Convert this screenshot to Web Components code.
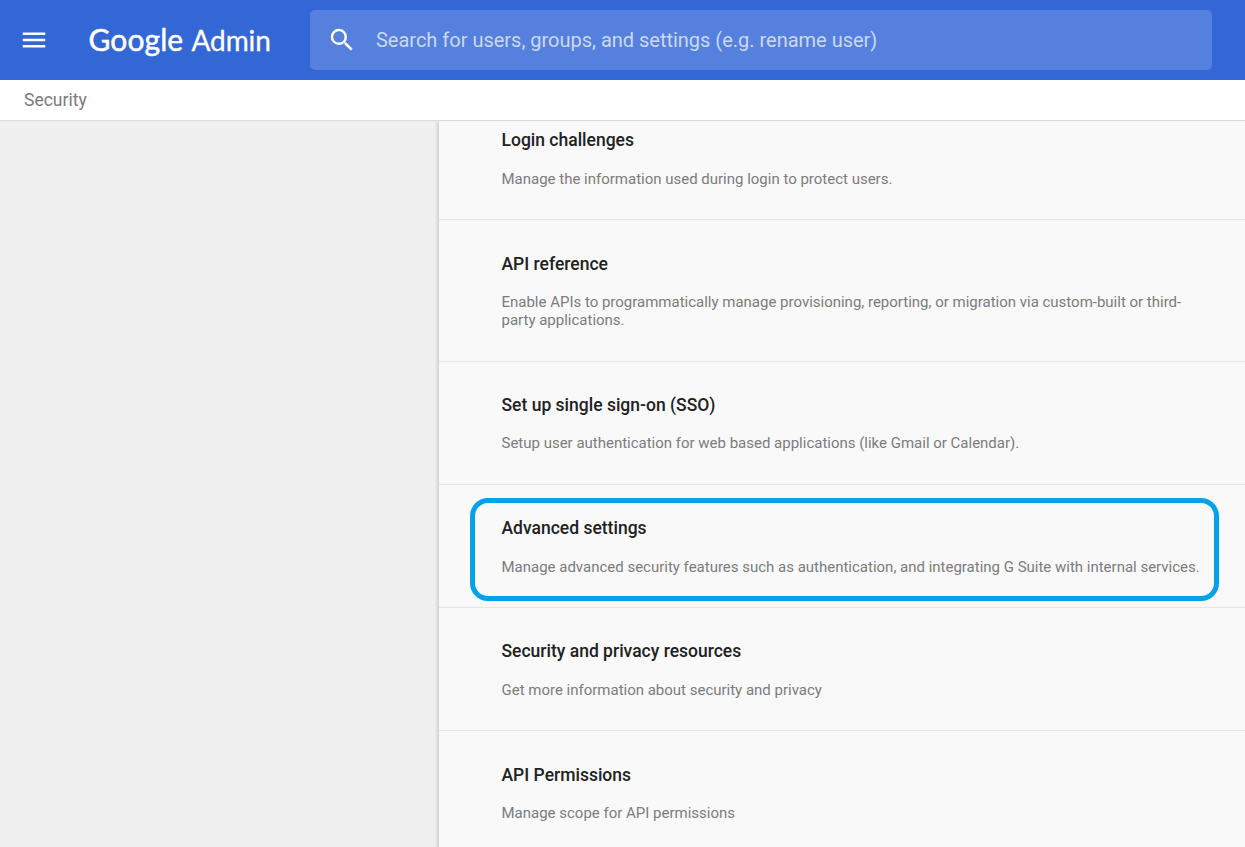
<!DOCTYPE html>
<html lang="en"><head><meta charset="utf-8"><title>Google Admin</title>
<style>html,body{margin:0;height:100%;overflow:hidden}body{font-family:Roboto,"Open Sans",sans-serif}</style></head>
<body><admin-page></admin-page>
<script>
function define(name, html) {
  customElements.define(name, class extends HTMLElement {
    constructor() {
      super();
      const t = document.createElement('template');
      t.innerHTML = html;
      this.attachShadow({mode: 'open'}).append(t.content.cloneNode(true));
    }
  });
}
define('admin-logo', `<style>
:host{display:flex;align-items:baseline;color:#fff;font-family:Lato,sans-serif;line-height:38px;padding-bottom:1px;white-space:nowrap}
.g{font-size:30px;width:103px;letter-spacing:.1px;-webkit-text-stroke:.5px #fff}
.a{font-size:28px;letter-spacing:-.1px;-webkit-text-stroke:.3px #fff}
</style><span class="g">Google</span><span class="a">Admin</span>`);
define('search-box', `<style>
:host{display:flex;align-items:center;box-sizing:border-box;width:902px;height:60px;border-radius:5px;background:#5580dd;padding-left:17px;color:#cbd8f5;font-size:20px}
svg{width:30px;height:30px;margin-right:19px;flex:none}
span{white-space:nowrap;letter-spacing:-.01px}
</style><svg viewBox="0 0 24 24" fill="#fff"><path d="M15.5 14h-.79l-.28-.27A6.47 6.47 0 0 0 16 9.5 6.5 6.5 0 1 0 9.5 16c1.61 0 3.09-.59 4.23-1.57l.27.28v.79l5 4.99L20.49 19l-4.99-5zm-6 0C7.01 14 5 11.99 5 9.5S7.01 5 9.5 5 14 7.01 14 9.5 11.99 14 9.5 14z"/></svg><span><slot></slot></span>`);
define('app-bar', `<style>
:host{display:flex;align-items:center;box-sizing:border-box;height:80px;background:#3367d6;padding-left:19px}
svg{width:30px;height:30px;flex:none}
admin-logo{margin-left:39.5px;width:221.5px;flex:none}
</style><svg viewBox="0 0 24 24" fill="#fff"><path d="M3 18h18v-2H3v2zm0-5h18v-2H3v2zm0-7v2h18V6H3z"/></svg>
<admin-logo></admin-logo><search-box>Search for users, groups, and settings (e.g. rename user)</search-box>`);
define('crumb-bar', `<style>
:host{display:flex;align-items:center;box-sizing:border-box;height:41px;background:#fff;border-bottom:1px solid #dcdcdc;padding-left:24px;color:#7b7b7b;font-size:17.5px}
</style><slot></slot>`);
define('setting-row', `<style>
:host{display:block;position:relative;box-sizing:border-box;height:var(--h,123px);border-bottom:1px solid #e5e5e5;padding:var(--top,32px) 46px 0 62.5px}
.t{color:#212121;font-size:17.5px;line-height:22px;font-weight:500}
.d{color:#7c7c7c;font-size:15px;line-height:18px;margin-top:var(--gap,19px);letter-spacing:-.006px;white-space:nowrap}
:host([highlight])::after{content:"";position:absolute;box-sizing:border-box;left:31px;top:13px;width:749px;height:103px;border:5px solid #00a2e8;border-radius:18px}
</style><div class="t"><slot name="title"></slot></div><div class="d"><slot></slot></div>`);
define('settings-list', `<style>
:host{display:block;background:#f9f9f9;box-shadow:0 0 5px rgba(0,0,0,.28)}
</style><slot></slot>`);
define('admin-page', `<style>
:host{display:flex;flex-direction:column;height:847px;background:#f0f0f0}
app-bar,crumb-bar{flex:none}
main{flex:1;min-height:0;display:grid;grid-template-columns:439px 1fr;overflow:hidden}
settings-list{grid-column:2}
.first{margin-top:-24px}
.tall{--h:142px}
.low{--top:33px}
.tight{--gap:18px}
</style><app-bar></app-bar><crumb-bar>Security</crumb-bar><main><settings-list>
<setting-row class="first"><span slot="title">Login challenges</span>Manage the information used during login to protect users.</setting-row>
<setting-row class="tall low tight"><span slot="title">API reference</span>Enable APIs to programmatically manage provisioning, reporting, or migration via custom-built or third-<br>party applications.</setting-row>
<setting-row class="tight"><span slot="title">Set up single sign-on (SSO)</span>Setup user authentication for web based applications (like Gmail or Calendar).</setting-row>
<setting-row highlight><span slot="title">Advanced settings</span>Manage advanced security features such as authentication, and integrating G Suite with internal services.</setting-row>
<setting-row><span slot="title">Security and privacy resources</span>Get more information about security and privacy</setting-row>
<setting-row class="low tight"><span slot="title">API Permissions</span>Manage scope for API permissions</setting-row>
</settings-list></main>`);
</script></body></html>
